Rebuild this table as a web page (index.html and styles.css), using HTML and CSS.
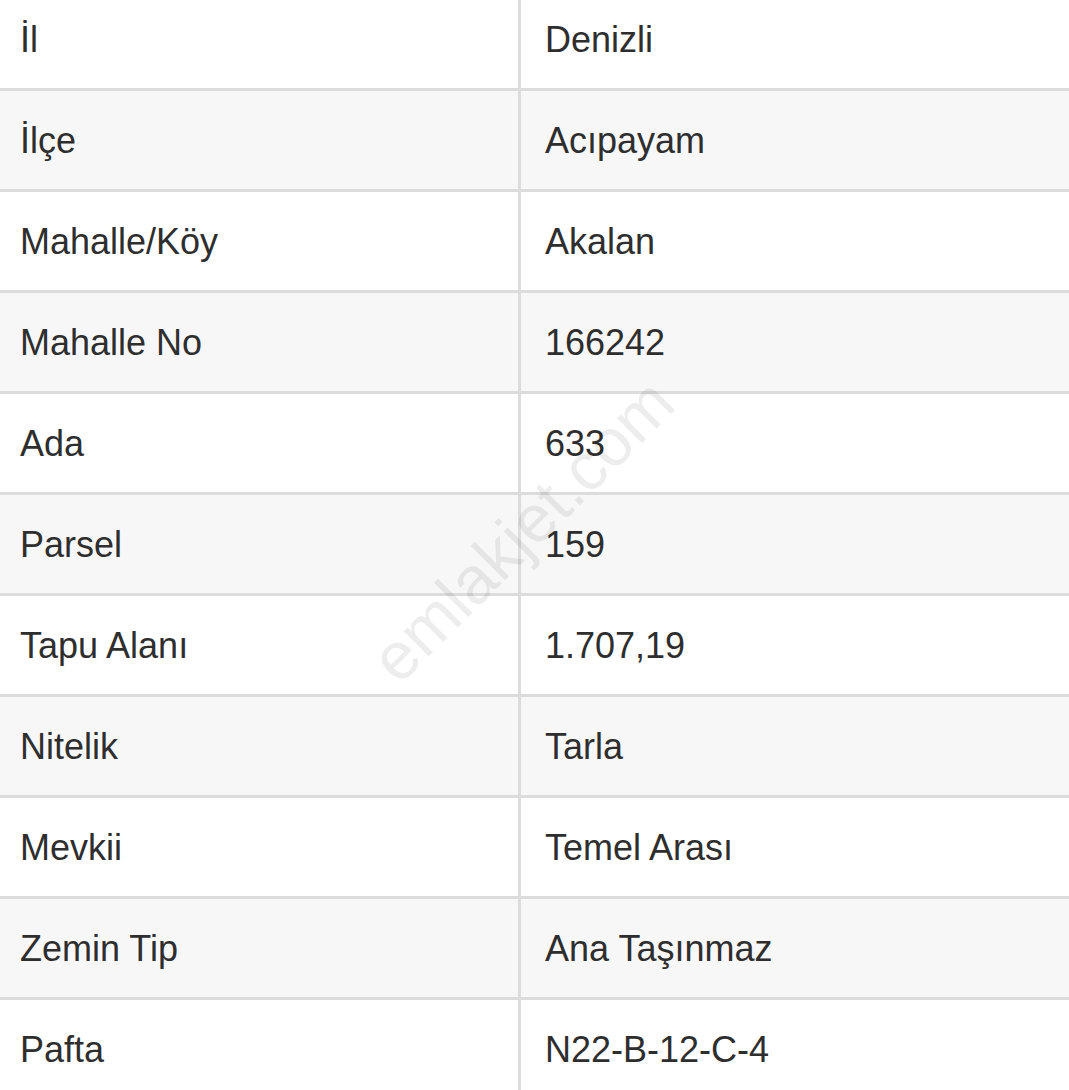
FILE: index.html
```html
<!DOCTYPE html>
<html lang="tr">
<head>
<meta charset="utf-8">
<title>Tapu Bilgileri</title>
<link rel="stylesheet" href="styles.css">
</head>
<body>
<div class="page">
  <div class="table">
    <div class="row"><div class="cell key">İl</div><div class="cell val">Denizli</div></div>
    <div class="row"><div class="cell key">İlçe</div><div class="cell val">Acıpayam</div></div>
    <div class="row"><div class="cell key">Mahalle/Köy</div><div class="cell val">Akalan</div></div>
    <div class="row"><div class="cell key">Mahalle No</div><div class="cell val">166242</div></div>
    <div class="row"><div class="cell key">Ada</div><div class="cell val">633</div></div>
    <div class="row"><div class="cell key">Parsel</div><div class="cell val">159</div></div>
    <div class="row"><div class="cell key">Tapu Alanı</div><div class="cell val">1.707,19</div></div>
    <div class="row"><div class="cell key">Nitelik</div><div class="cell val">Tarla</div></div>
    <div class="row"><div class="cell key">Mevkii</div><div class="cell val">Temel Arası</div></div>
    <div class="row"><div class="cell key">Zemin Tip</div><div class="cell val">Ana Taşınmaz</div></div>
    <div class="row"><div class="cell key">Pafta</div><div class="cell val">N22-B-12-C-4</div></div>
  </div>
  <div class="watermark">emlakjet.com</div>
</div>
</body>
</html>
```
FILE: styles.css
```css
html, body {
  margin: 0;
  padding: 0;
  background: #ffffff;
  overflow: hidden;
}
.page {
  position: relative;
  width: 1069px;
  height: 1090px;
  overflow: hidden;
}
.table {
  margin-top: -10px;
  display: flex;
  flex-direction: column;
  font-family: "Liberation Sans", Arial, Helvetica, sans-serif;
  font-size: 36px;
  color: #2e2e2e;
}
.row {
  display: grid;
  grid-template-columns: 521px 1fr;
  height: 98px;
  border-bottom: 3px solid #dcdcdc;
  background: #ffffff;
}
.row:nth-child(even) {
  background: #f8f7f8;
}
.cell {
  display: flex;
  align-items: center;
  padding-top: 2px;
}
.key {
  padding-left: 20px;
  border-right: 3px solid #dcdcdc;
}
.val {
  padding-left: 24px;
}
.watermark {
  position: absolute;
  left: 522px;
  top: 530px;
  transform: translate(-50%, -50%) rotate(-45deg);
  font-family: "Liberation Sans", Arial, sans-serif;
  font-size: 67px;
  color: rgba(0, 0, 0, 0.07);
  white-space: nowrap;
  pointer-events: none;
}
```
